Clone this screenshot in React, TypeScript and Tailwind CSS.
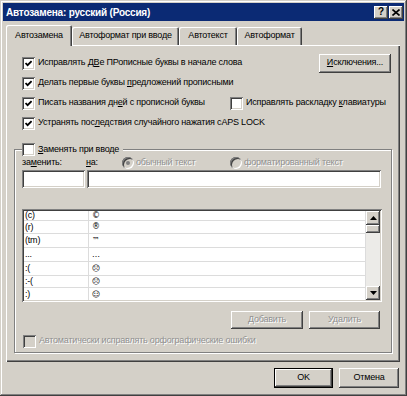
import React from "react";

const raised =
  "shadow-[inset_-1px_-1px_#404040,inset_1px_1px_#ffffff,inset_-2px_-2px_#808080,inset_2px_2px_#d4d0c8]";
const sunken =
  "shadow-[inset_1px_1px_#808080,inset_-1px_-1px_#ffffff,inset_2px_2px_#404040,inset_-2px_-2px_#d4d0c8]";
const dim = "text-[#909090] [text-shadow:1px_1px_0_#ffffff]";

function Check({ checked = false, disabled = false }: { checked?: boolean; disabled?: boolean }) {
  return (
    <span
      className={`flex h-[13px] w-[13px] shrink-0 items-center justify-center ${
        disabled ? "bg-[#d4d0c8]" : "bg-white"
      } ${sunken}`}
    >
      {checked && (
        <svg width="7" height="7" viewBox="0 0 7 7">
          <path d="M0.5 3 L2.6 5.2 L6.6 1" fill="none" stroke="#000" strokeWidth="1.8" />
        </svg>
      )}
    </span>
  );
}

function Radio({ checked = false }: { checked?: boolean }) {
  return (
    <span className="flex h-[12px] w-[12px] shrink-0 items-center justify-center rounded-full bg-[#d4d0c8] shadow-[inset_1px_1px_#808080,inset_-1px_-1px_#ffffff,inset_2px_2px_#404040]">
      {checked && <span className="h-[4px] w-[4px] rounded-full bg-[#808080]" />}
    </span>
  );
}

function U({ children }: { children: React.ReactNode }) {
  return <span className="underline underline-offset-[1px]">{children}</span>;
}

function Option({ checked, children }: { checked?: boolean; children: React.ReactNode }) {
  return (
    <div className="flex items-center gap-[3px]">
      <Check checked={checked} />
      <span className="whitespace-nowrap">{children}</span>
    </div>
  );
}

const rows: [string, string, number][] = [
  ["(c)", "©", 10],
  ["(r)", "®", 13],
  ["(tm)", "™", 14],
  ["...", "…", 14],
  [":(", "☹", 14],
  [":-(", "☹", 12],
  [":)", "☺", 14],
];

function Arrow({ down = false }: { down?: boolean }) {
  return (
    <svg width="7" height="4" viewBox="0 0 7 4">
      <path d={down ? "M0 0 H7 L3.5 4 Z" : "M0 4 H7 L3.5 0 Z"} fill="#000" />
    </svg>
  );
}

export default function App() {
  return (
    <div className="flex h-[396px] w-[407px] flex-col bg-[#d4d0c8] p-[3px] [font-family:'Liberation_Sans',Arial,sans-serif] text-[9px] tracking-[-0.2px] text-black shadow-[inset_-1px_-1px_#404040,inset_1px_1px_#d4d0c8,inset_-2px_-2px_#808080,inset_2px_2px_#ffffff]">
      {/* title bar */}
      <div className="flex h-[18px] items-center justify-between bg-[#0b2a74] pl-[3px] pr-[1px]">
        <span className="text-[10px] font-bold tracking-[-0.2px] text-white">Автозамена: русский (Россия)</span>
        <div className="flex gap-[1px]">
          <div className={`flex h-[13px] w-[14px] items-center justify-center bg-[#d4d0c8] text-[10px] font-bold leading-none ${raised}`}>
            ?
          </div>
          <div className={`flex h-[13px] w-[14px] items-center justify-center bg-[#d4d0c8] ${raised}`}>
            <svg width="8" height="7" viewBox="0 0 8 7">
              <path d="M0.5 0.5 L7.5 6.5 M7.5 0.5 L0.5 6.5" stroke="#000" strokeWidth="1.6" />
            </svg>
          </div>
        </div>
      </div>

      {/* tabs */}
      <div className="relative z-10 mt-[4px] flex h-[20px] items-end pl-[3px]">
        <div className="-mb-[1px] flex h-[21px] w-[66px] items-center justify-center rounded-t-[2px] bg-[#d4d0c8] shadow-[inset_1px_1px_#ffffff,inset_-1px_0_#404040,inset_-2px_0_#808080]">
          Автозамена
        </div>
        <div className="flex h-[18px] w-[107px] items-center justify-center whitespace-nowrap rounded-t-[2px] shadow-[inset_1px_1px_#ffffff,inset_-1px_0_#404040,inset_-2px_0_#808080]">
          Автоформат при вводе
        </div>
        <div className="flex h-[18px] w-[58px] items-center justify-center rounded-t-[2px] shadow-[inset_1px_1px_#ffffff,inset_-1px_0_#404040,inset_-2px_0_#808080]">
          Автотекст
        </div>
        <div className="flex h-[18px] w-[65px] items-center justify-center rounded-t-[2px] shadow-[inset_1px_1px_#ffffff,inset_-1px_0_#404040,inset_-2px_0_#808080]">
          Автоформат
        </div>
      </div>

      {/* panel */}
      <div className="ml-[3px] flex h-[317px] w-[394px] flex-col pl-[8px] pt-[8px] shadow-[inset_1px_1px_#ffffff,inset_-1px_-1px_#404040,inset_-2px_-2px_#808080]">
        <div className="flex h-[20px] items-center justify-between pl-[8px] pr-[9px]">
          <Option checked>
            Исправлять Д<U>В</U>е ПРописные буквы в начале слова
          </Option>
          <div className={`flex h-[19px] w-[72px] items-center justify-center ${raised}`}>
            <U>И</U>сключения...
          </div>
        </div>
        <div className="flex h-[20px] items-center pl-[8px]">
          <Option checked>
            Делать первые буквы <U>п</U>редложений прописными
          </Option>
        </div>
        <div className="flex h-[20px] items-center pl-[8px]">
          <div className="w-[208px]">
            <Option checked>
              Писать названия дн<U>е</U>й с прописной буквы
            </Option>
          </div>
          <Option>
            Исправлять раскладку <U>к</U>лавиатуры
          </Option>
        </div>
        <div className="flex h-[20px] items-center pl-[8px]">
          <Option checked>
            Устранять пос<U>л</U>едствия случайного нажатия cAPS LOCK
          </Option>
        </div>

        {/* group box */}
        <div className="relative mt-[16px] h-[204px] w-[378px] border border-[#808080] pl-[7px] shadow-[1px_1px_0_#ffffff,inset_1px_1px_0_#ffffff]">
          <div className="absolute -top-[7px] left-[7px] flex items-center gap-[3px] bg-[#d4d0c8] pr-[4px]">
            <Check />
            <span>
              <U>З</U>аменять при вводе
            </span>
          </div>

          <div className="mt-[6px] flex h-[14px] items-center">
            <span className="w-[64px]">
              за<U>м</U>енить:
            </span>
            <span className="w-[36px]">
              <U>н</U>а:
            </span>
            <div className="flex w-[108px] items-center gap-[2px]">
              <Radio checked />
              <span className={dim}>обычный текст</span>
            </div>
            <div className="flex items-center gap-[2px]">
              <Radio />
              <span className={dim}>форматированный текст</span>
            </div>
          </div>

          <div className="flex h-[18px] gap-[2px]">
            <div className={`w-[63px] bg-white ${sunken}`} />
            <div className={`w-[294px] bg-white ${sunken}`} />
          </div>

          {/* list */}
          <div className={`mt-[21px] flex h-[93px] w-[360px] bg-white p-[2px] ${sunken}`}>
            <div className="flex flex-1 flex-col overflow-hidden">
              {rows.map(([a, b, h], i) => (
                <div
                  key={i}
                  className="grid shrink-0 grid-cols-[65px_1fr] border-b border-[#dcdcdc]"
                  style={{ height: h }}
                >
                  <span className="flex items-center border-r border-[#dcdcdc] pl-[1px] leading-none">{a}</span>
                  <span className="flex items-center pl-[3px] [font-family:'DejaVu_Sans',sans-serif] text-[8px] leading-none">
                    {b}
                  </span>
                </div>
              ))}
            </div>
            <div className="flex w-[15px] flex-col border-l border-[#dcdcdc] bg-[#ecebe8]">
              <div className={`flex h-[14px] items-center justify-center bg-[#d4d0c8] ${raised}`}>
                <Arrow />
              </div>
              <div className={`h-[8px] bg-[#d4d0c8] ${raised}`} />
              <div className="flex-1" />
              <div className={`flex h-[14px] items-center justify-center bg-[#d4d0c8] ${raised}`}>
                <Arrow down />
              </div>
            </div>
          </div>

          <div className="mt-[9px] flex w-[360px] justify-end gap-[6px] pr-[2px]">
            <div className={`flex h-[18px] w-[72px] items-center justify-center ${dim} ${raised}`}>Добавить</div>
            <div className={`flex h-[18px] w-[71px] items-center justify-center ${dim} ${raised}`}>Удалить</div>
          </div>

          <div className="mt-[5px] flex h-[14px] items-center gap-[3px] pl-[1px]">
            <Check disabled />
            <span className={dim}>Автоматически исправлять орфографические ошибки</span>
          </div>
        </div>
      </div>

      {/* dialog buttons */}
      <div className="mt-[6px] flex justify-end gap-[6px] pr-[5px]">
        <div className="flex h-[20px] w-[59px] items-center justify-center border border-black shadow-[inset_-1px_-1px_#404040,inset_1px_1px_#ffffff,inset_-2px_-2px_#808080]">
          OK
        </div>
        <div className={`flex h-[20px] w-[60px] items-center justify-center ${raised}`}>Отмена</div>
      </div>
    </div>
  );
}
